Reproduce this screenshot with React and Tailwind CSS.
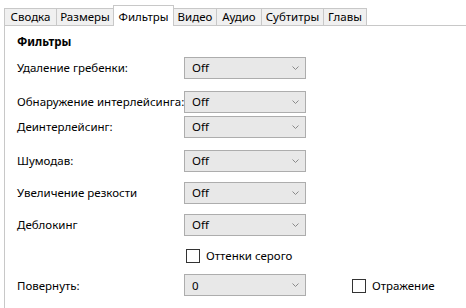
import React from "react";

const font = { fontFamily: '"Noto Sans", "Open Sans", sans-serif' };

function Chevron() {
  return (
    <svg width="7" height="5" viewBox="0 0 7 5" className="absolute right-[6px] top-[8px]">
      <path d="M0.5 0.5 L3.5 3.5 L6.5 0.5" fill="none" stroke="#8a8a8a" strokeWidth="1" />
    </svg>
  );
}

function Combo({ value }) {
  return (
    <div className="relative w-[122px] h-[22px] border border-[#adadad] bg-[#e8e8e8] flex items-center pl-[7px] text-[11.5px] text-black">
      {value}
      <Chevron />
    </div>
  );
}

function Row({ label, value, className = "" }) {
  return (
    <div className={"flex items-center " + className}>
      <div className="w-[167px] text-[11.5px] text-black whitespace-nowrap">{label}</div>
      <Combo value={value} />
    </div>
  );
}

function Check({ label }) {
  return (
    <div className="flex items-center">
      <div className="w-[14px] h-[14px] border border-[#333333] bg-white" />
      <span className="ml-[6px] text-[11.5px] text-black">{label}</span>
    </div>
  );
}

const tabs = [
  { name: "Сводка", w: 52 },
  { name: "Размеры", w: 57 },
  { name: "Фильтры", w: 60, active: true },
  { name: "Видео", w: 43 },
  { name: "Аудио", w: 45 },
  { name: "Субтитры", w: 62 },
  { name: "Главы", w: 43 },
];

export default function App() {
  return (
    <div className="w-[466px] h-[308px] bg-white overflow-hidden" style={font}>
      <div className="flex items-end h-[25px] pl-[4px] relative z-10">
        {tabs.map((t) =>
          t.active ? (
            <div
              key={t.name}
              className="h-[21px] bg-white border border-b-0 border-[#c8c8c8] flex items-start justify-center pt-[2px] text-[11.5px] text-black -mb-px"
              style={{ width: t.w + 1, marginLeft: -1 }}
            >
              {t.name}
            </div>
          ) : (
            <div
              key={t.name}
              className="h-[17px] bg-[#f0f0f0] border border-[#c8c8c8] border-b-0 flex items-center justify-center text-[11.5px] text-black -ml-px first:ml-0"
              style={{ width: t.w + 1 }}
            >
              {t.name}
            </div>
          )
        )}
      </div>
      <div className="ml-[4px] border-l border-t border-[#c8c8c8] h-[283px] pl-[12px] pt-[8px]">
        <div className="text-[11.5px] font-bold text-black leading-[16px]">Фильтры</div>
        <Row label="Удаление гребенки:" value="Off" className="mt-[7px]" />
        <Row label="Обнаружение интерлейсинга:" value="Off" className="mt-[12px]" />
        <Row label="Деинтерлейсинг:" value="Off" className="mt-[3px]" />
        <Row label="Шумодав:" value="Off" className="mt-[12px]" />
        <Row label="Увеличение резкости" value="Off" className="mt-[10px]" />
        <Row label="Деблокинг" value="Off" className="mt-[10px]" />
        <div className="ml-[169px] mt-[11px]">
          <Check label="Оттенки серого" />
        </div>
        <div className="flex items-center mt-[10px]">
          <Row label="Повернуть:" value="0" />
          <div className="ml-[46px] mt-[1px]">
            <Check label="Отражение" />
          </div>
        </div>
      </div>
    </div>
  );
}
